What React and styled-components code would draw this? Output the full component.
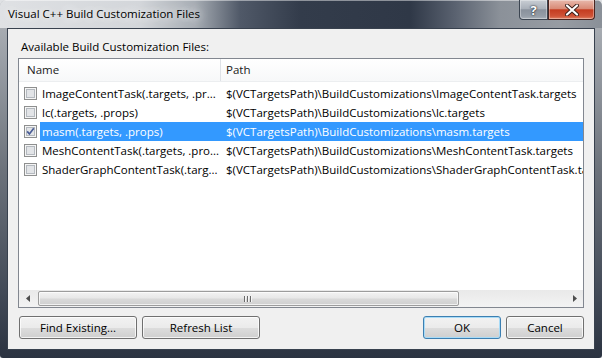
import React from 'react';
import styled, { createGlobalStyle } from 'styled-components';

const GlobalStyle = createGlobalStyle`
  *, *::before, *::after { box-sizing: border-box; }
  html, body { margin: 0; padding: 0; background: #dfe1e4; }
  body {
    font-family: "Segoe UI", "Open Sans", "Noto Sans", sans-serif;
    font-size: 11.5px;
    color: #000;
  }
`;

const Window = styled.div`
  width: 602px;
  height: 358px;
  display: flex;
  flex-direction: column;
  border-radius: 6px 6px 3px 3px;
  overflow: hidden;
  background: linear-gradient(to bottom, #b3b7bc 0, #9a9fa6 60px, #6c727b 170px, #434b58 290px, #2b3341 358px);
`;

const TitleBar = styled.div`
  height: 28px;
  flex: none;
  display: flex;
  align-items: flex-start;
  justify-content: space-between;
  padding: 0 7px 0 8px;
  background: linear-gradient(
    to right,
    #dfe1e4 0,
    #d3d6da 140px,
    #a7adb4 195px,
    #505968 240px,
    #333c4b 300px,
    #2f3847 410px,
    #5a6270 455px,
    #8b9199 500px,
    #979ca3 560px,
    #8a9098 602px
  );
  box-shadow: inset 0 1px 0 rgba(255, 255, 255, 0.45);
`;

const TitleText = styled.div`
  line-height: 28px;
  color: #000;
  text-shadow: 0 0 8px #fff, 0 0 14px rgba(255, 255, 255, 0.9);
`;

const CaptionButtons = styled.div`
  display: flex;
`;

const CaptionButton = styled.div`
  width: ${(p) => p.$w}px;
  height: 20px;
  display: flex;
  align-items: center;
  justify-content: center;
  border: 1px solid ${(p) => (p.$close ? '#4a2520' : '#3c4551')};
  border-top: none;
  border-radius: ${(p) => (p.$close ? '0 0 4px 0' : '0 0 0 4px')};
  background: ${(p) =>
    p.$close
      ? 'linear-gradient(to bottom, #e8b9ac 0, #d98b77 45%, #c43c20 52%, #cf5337 85%, #e08466 100%)'
      : 'linear-gradient(to bottom, #c9ced4 0, #aab1ba 45%, #89919c 52%, #959da7 85%, #aab1b9 100%)'};
  box-shadow: inset 0 0 0 1px rgba(255, 255, 255, 0.35);
  color: #fff;
  font-weight: bold;
  font-size: 13px;
  text-shadow: 0 0 1px #1c222b, 0 0 2px #1c222b;
`;

const Frame = styled.div`
  flex: 1;
  min-height: 0;
  display: flex;
  padding: 0 7px 8px;
`;

const Client = styled.div`
  flex: 1;
  min-width: 0;
  display: flex;
  flex-direction: column;
  background: #f0f0f0;
  border: 1px solid #38414e;
  padding: 10px;
`;

const Label = styled.div`
  line-height: 16px;
  padding-left: 3px;
  margin-bottom: 3px;
`;

const ListBox = styled.div`
  height: 250px;
  flex: none;
  min-width: 0;
  display: flex;
  flex-direction: column;
  border: 1px solid #828790;
  background: #fff;
  overflow: hidden;
`;

const Header = styled.div`
  height: 23px;
  flex: none;
  display: flex;
  background: linear-gradient(to bottom, #ffffff 0, #f7f8f9 100%);
  border-bottom: 1px solid #eceef0;
`;

const HeaderCell = styled.div`
  width: ${(p) => (p.$w ? `${p.$w}px` : 'auto')};
  flex: ${(p) => (p.$w ? 'none' : '1')};
  line-height: 22px;
  padding-left: ${(p) => p.$pad}px;
  border-right: ${(p) => (p.$w ? '1px solid #dfe2e7' : 'none')};
  color: #1a1a1a;
`;

const Body = styled.div`
  flex: 1;
  min-height: 0;
  padding-top: 2px;
  overflow: hidden;
`;

const Row = styled.div`
  height: 19px;
  display: flex;
  white-space: nowrap;
`;

const CheckArea = styled.div`
  width: 21px;
  flex: none;
  display: flex;
  align-items: center;
  padding-left: 5px;
`;

const RowContent = styled.div`
  flex: 1;
  min-width: 0;
  display: flex;
  line-height: 19px;
  background: ${(p) => (p.$selected ? '#3399ff' : 'transparent')};
  color: ${(p) => (p.$selected ? '#fff' : '#000')};
`;

const NameText = styled.div`
  width: 181px;
  flex: none;
  padding-left: 2px;
  overflow: hidden;
`;

const PathText = styled.div`
  flex: 1;
  min-width: 0;
  padding-left: 5px;
  overflow: hidden;
`;

const ScrollBar = styled.div`
  height: 17px;
  flex: none;
  display: flex;
  background: linear-gradient(to bottom, #e9e9e9 0, #f3f3f3 100%);
`;

const ArrowButton = styled.div`
  width: 17px;
  flex: none;
  display: flex;
  align-items: center;
  justify-content: center;
`;

const Thumb = styled.div`
  width: ${(p) => p.$w}px;
  flex: none;
  margin: 1px 0 1px 2px;
  display: flex;
  align-items: center;
  justify-content: center;
  border: 1px solid #9c9c9c;
  border-radius: 2px;
  background: linear-gradient(to bottom, #f3f3f3 0, #e8e8e8 45%, #d9d9d9 55%, #d0d0d0 100%);
  box-shadow: inset 0 0 0 1px rgba(255, 255, 255, 0.7);
`;

const Grip = styled.span`
  width: 1px;
  height: 6px;
  background: #6a6a6a;
  box-shadow: 1px 0 0 #f6f6f6;
  margin-right: 2px;
`;

const Track = styled.div`
  flex: 1;
`;

const ButtonRow = styled.div`
  display: flex;
  gap: 5px;
  margin-top: 8px;
  padding-left: 1px;
`;

const Spacer = styled.div`
  flex: 1;
`;

const Button = styled.div`
  width: ${(p) => p.$w}px;
  flex: none;
  height: 23px;
  display: flex;
  align-items: center;
  justify-content: center;
  border: 1px solid ${(p) => (p.$default ? '#3c7fb1' : '#707070')};
  border-radius: 3px;
  background: linear-gradient(to bottom, #f2f2f2 0, #ebebeb 50%, #dddddd 51%, #cfcfcf 100%);
  box-shadow: inset 0 0 0 1px ${(p) => (p.$default ? '#a8dbf7' : 'rgba(255, 255, 255, 0.75)')};
  color: #000;
`;

const CheckBox = ({ checked }) => (
  <svg width="13" height="13" viewBox="0 0 13 13">
    <rect x="0.5" y="0.5" width="12" height="12" fill="#f5f5f5" stroke="#8e8f8f" />
    <rect x="2.5" y="2.5" width="8" height="8" fill="#e2e4e7" stroke="#b4b9bf" />
    {checked && (
      <path d="M3.2 6.4 L5.4 9 L9.8 3.2" fill="none" stroke="#4a5d96" strokeWidth="1.7" />
    )}
  </svg>
);

const rows = [
  {
    name: 'ImageContentTask(.targets, .pr...',
    path: '$(VCTargetsPath)\\BuildCustomizations\\ImageContentTask.targets',
  },
  { name: 'lc(.targets, .props)', path: '$(VCTargetsPath)\\BuildCustomizations\\lc.targets' },
  {
    name: 'masm(.targets, .props)',
    path: '$(VCTargetsPath)\\BuildCustomizations\\masm.targets',
    checked: true,
    selected: true,
  },
  {
    name: 'MeshContentTask(.targets, .pro...',
    path: '$(VCTargetsPath)\\BuildCustomizations\\MeshContentTask.targets',
  },
  {
    name: 'ShaderGraphContentTask(.targ...',
    path: '$(VCTargetsPath)\\BuildCustomizations\\ShaderGraphContentTask.targets',
  },
];

const App = () => (
  <>
    <GlobalStyle />
    <Window>
      <TitleBar>
        <TitleText>Visual C++ Build Customization Files</TitleText>
        <CaptionButtons>
          <CaptionButton $w={29}>?</CaptionButton>
          <CaptionButton $w={47} $close>
            <svg width="14" height="12" viewBox="0 0 14 12">
              <path d="M2 1.5 L12 10.5 M12 1.5 L2 10.5" stroke="#3a1f1a" strokeWidth="4" strokeLinecap="round" />
              <path d="M2 1.5 L12 10.5 M12 1.5 L2 10.5" stroke="#fff" strokeWidth="2.2" strokeLinecap="round" />
            </svg>
          </CaptionButton>
        </CaptionButtons>
      </TitleBar>
      <Frame>
        <Client>
          <Label>Available Build Customization Files:</Label>
          <ListBox>
            <Header>
              <HeaderCell $w={202} $pad={8}>Name</HeaderCell>
              <HeaderCell $pad={5}>Path</HeaderCell>
            </Header>
            <Body>
              {rows.map((r) => (
                <Row key={r.name}>
                  <CheckArea>
                    <CheckBox checked={r.checked} />
                  </CheckArea>
                  <RowContent $selected={r.selected}>
                    <NameText>{r.name}</NameText>
                    <PathText>{r.path}</PathText>
                  </RowContent>
                </Row>
              ))}
            </Body>
            <ScrollBar>
              <ArrowButton>
                <svg width="4" height="7" viewBox="0 0 4 7">
                  <path d="M4 0 L0 3.5 L4 7 Z" fill="#4d4d4d" />
                </svg>
              </ArrowButton>
              <Thumb $w={421}>
                <Grip />
                <Grip />
                <Grip />
              </Thumb>
              <Track />
              <ArrowButton>
                <svg width="4" height="7" viewBox="0 0 4 7">
                  <path d="M0 0 L4 3.5 L0 7 Z" fill="#4d4d4d" />
                </svg>
              </ArrowButton>
            </ScrollBar>
          </ListBox>
          <ButtonRow>
            <Button $w={118}>Find Existing...</Button>
            <Button $w={118}>Refresh List</Button>
            <Spacer />
            <Button $w={78} $default>OK</Button>
            <Button $w={78}>Cancel</Button>
          </ButtonRow>
        </Client>
      </Frame>
    </Window>
  </>
);

export default App;
